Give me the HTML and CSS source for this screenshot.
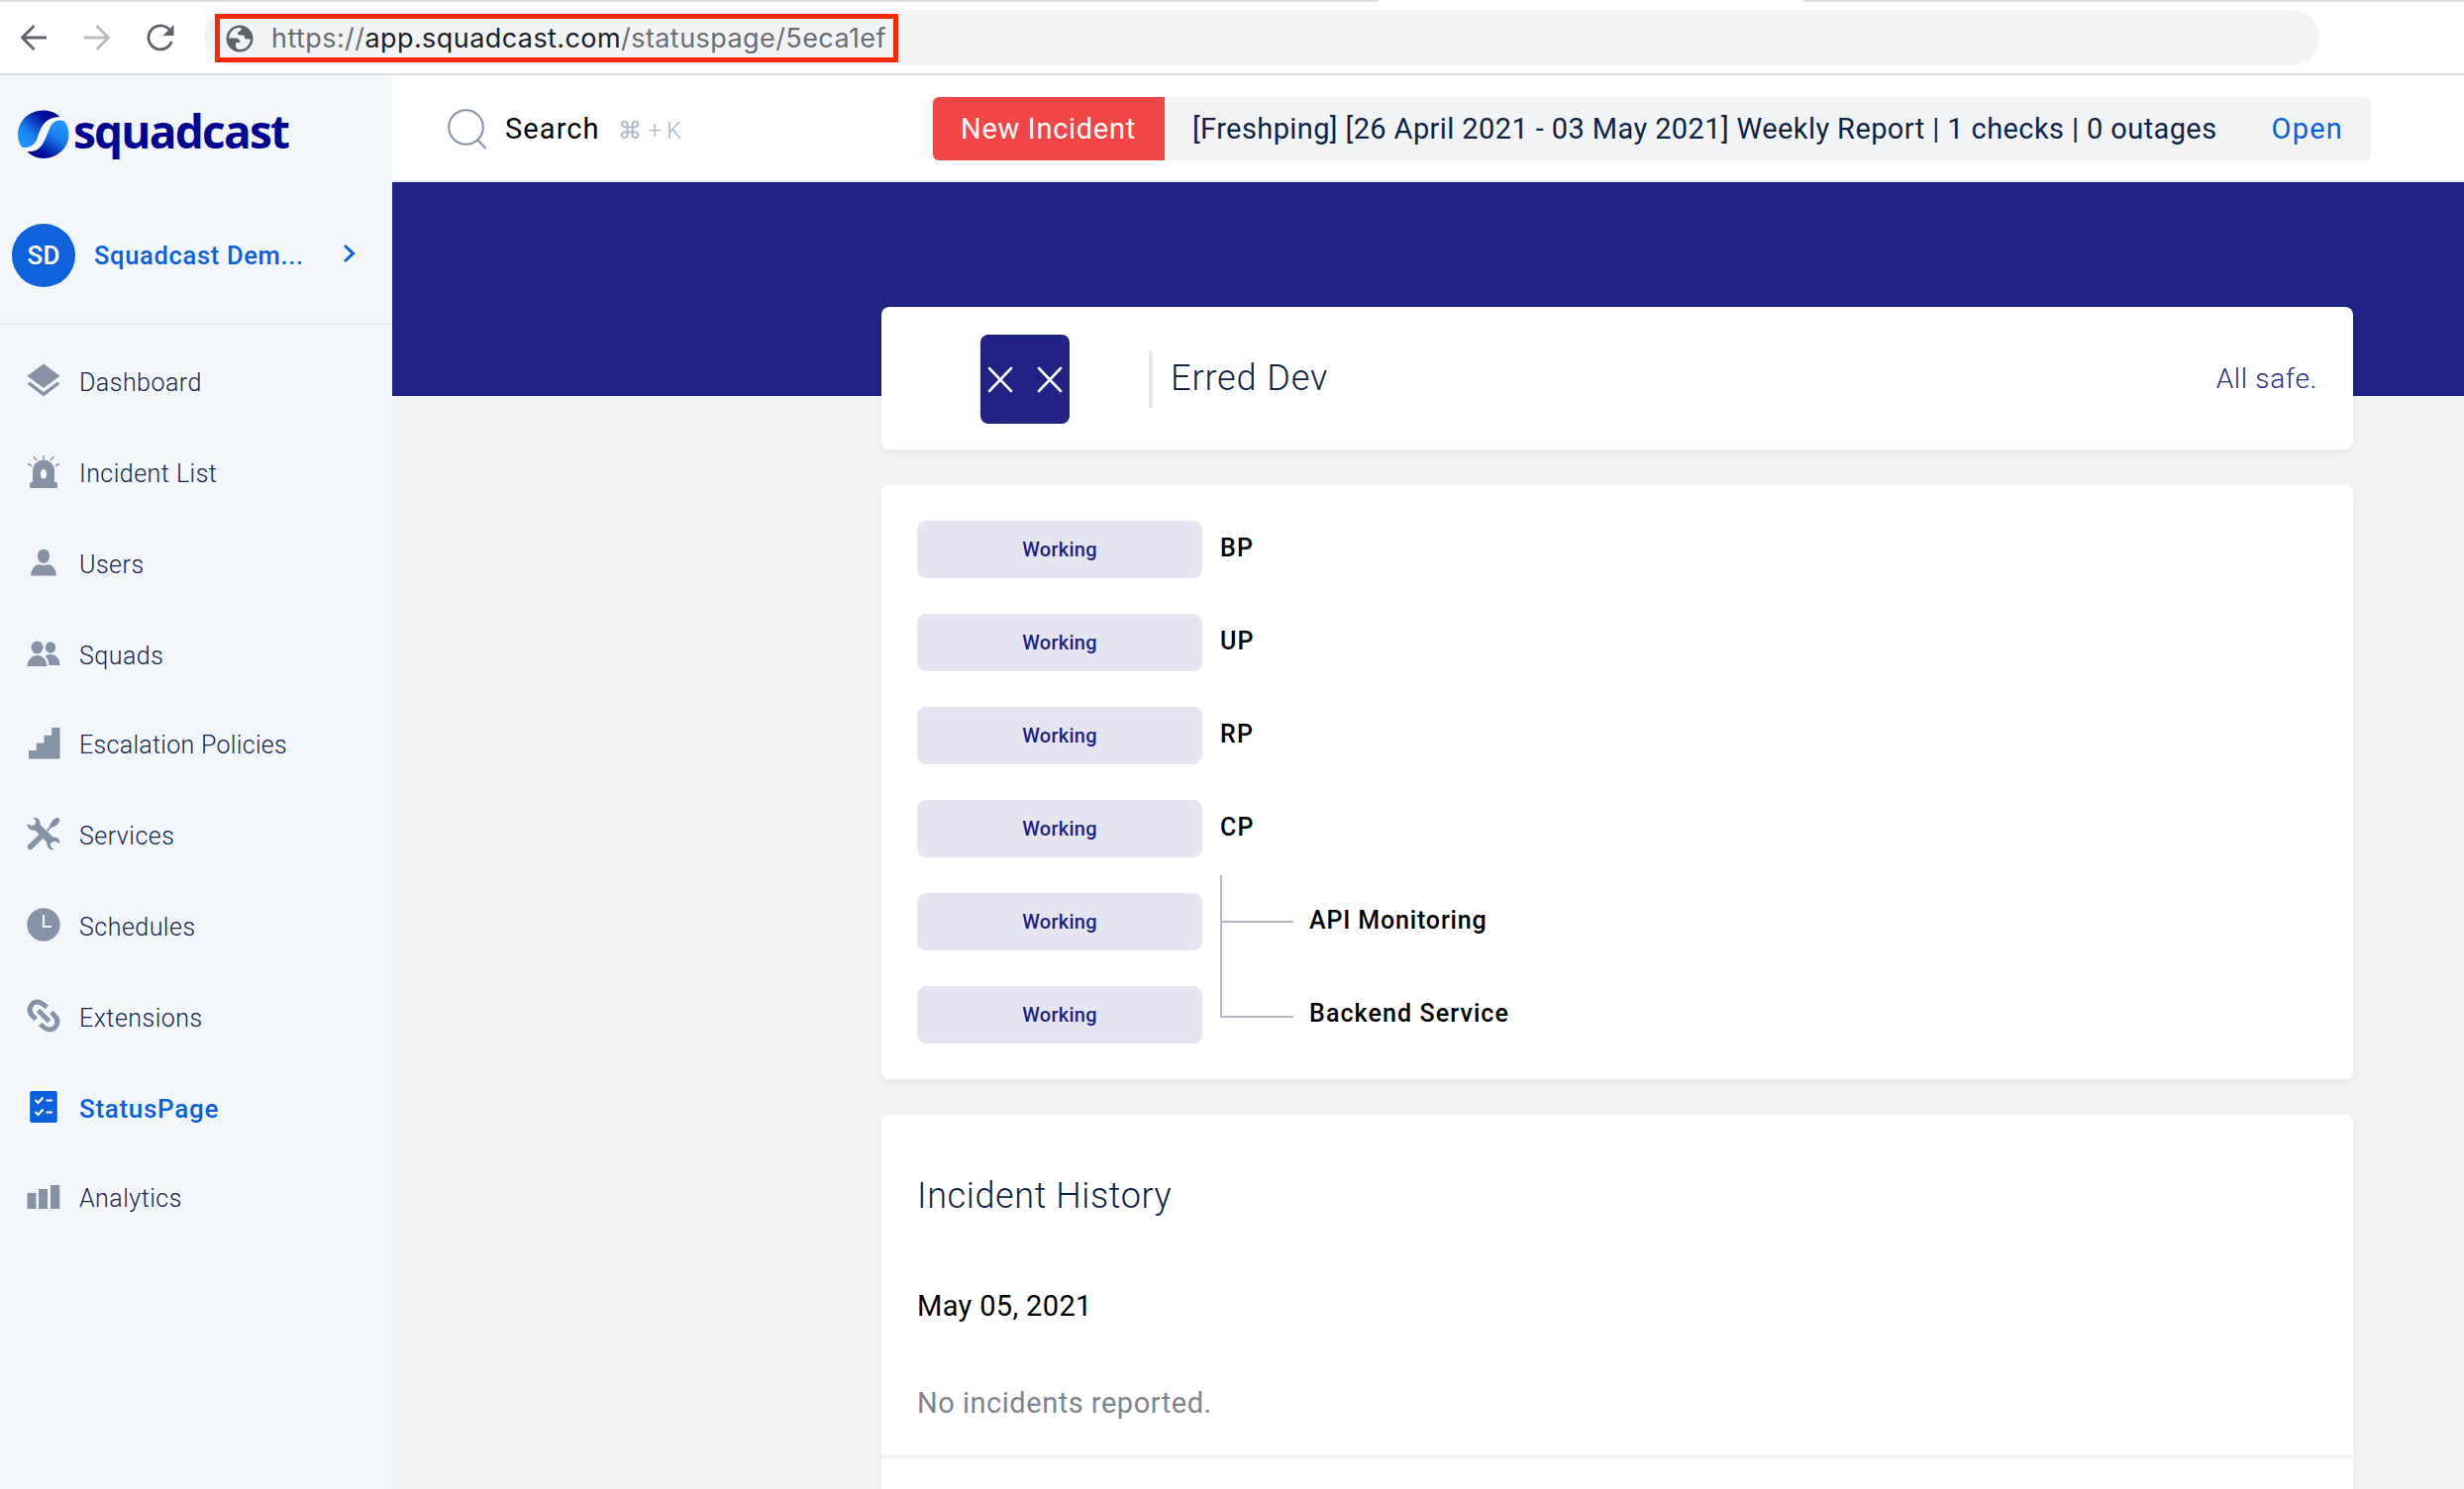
FILE: index.html
```html
<!DOCTYPE html>
<html lang="en">
<head>
<meta charset="utf-8">
<title>Erred Dev - Squadcast</title>
<link rel="stylesheet" href="styles.css">
</head>
<body>
<header class="browser">
  <div class="tab-edge"><span class="tab-line tab-line-left"></span><span class="tab-line tab-line-right"></span></div>
  <div class="toolbar">
    <svg class="nav-icon" width="28" height="28" viewBox="0 0 28 28" fill="none" stroke="#5f6368" stroke-width="2.8"><path d="M27 14H3M14.500 2L2.500 14l12 12"/></svg>
    <svg class="nav-icon" width="28" height="28" viewBox="0 0 28 28" fill="none" stroke="#babcbe" stroke-width="2.800"><path d="M1 14h24M13.500 2l12 12-12 12"/></svg>
    <svg class="nav-icon" width="28" height="28" viewBox="0 0 28 28" fill="none"><path d="M23.500 6.500A12 12 0 1 0 25.300 18" stroke="#5f6368" stroke-width="2.800"/><path d="M27.500 1v11H16.500z" fill="#5f6368"/></svg>
    <div class="omnibox">
      <div class="url-highlight">
        <svg width="28" height="28" viewBox="0 0 28 28" fill="#5f6368"><circle cx="14" cy="14" r="12.200" fill="#f1f3f4" stroke="#5f6368" stroke-width="2.600"/><path d="M15.500 2v2.500c0 1.300-.8 2-2 2.200-1 .2-1.500.8-1.500 1.800 0 1.200.8 2 2 2h3.200c1 0 1.600.6 1.600 1.500 0 1.600 1 2.600 2.500 2.600h5.500C26.500 7.500 22 2.500 15.500 2z"/><path d="M1.500 13.500h8.300c2.800 0 4.700 1.800 4.700 4.500h-3.200c-.8 0-1.300.5-1.300 1.300v2.400c0 1 .6 1.700 1.500 2V26C5.500 25 1.500 20 1.500 13.500z"/></svg>
        <span class="url">https://<b>app.squadcast.com</b>/statuspage/5eca1ef</span>
      </div>
    </div>
  </div>
</header>

<div class="app">
  <aside class="sidebar">
    <div class="logo">
      <svg width="52" height="50" viewBox="0 0 52 50">
        <defs>
          <linearGradient id="lg1" x1="0.1" y1="0.9" x2="0.9" y2="0.1"><stop offset="0" stop-color="#2296ff"/><stop offset=".3" stop-color="#1a7ef0"/><stop offset=".75" stop-color="#0312a0"/><stop offset="1" stop-color="#000490"/></linearGradient>
          <linearGradient id="lg2" x1="0.85" y1="0.05" x2="0.2" y2="1"><stop offset="0" stop-color="#2296ff"/><stop offset=".35" stop-color="#1a7ef0"/><stop offset=".8" stop-color="#0312a0"/><stop offset="1" stop-color="#000490"/></linearGradient>
        </defs>
        <path d="M42.500 7C37 1 28 -.8 19 1.200 7 4.200 0 14 0 25c0 5 1.500 9.500 4.500 13 7 .5 12-2 15-9C23 19 26 7.500 42.500 7z" fill="url(#lg1)"/>
        <path d="M9.500 42C15 48 23 50 31 48.500 43.500 46 51.500 36 51.500 25c0-5-1.500-10-4.500-13.500C39 8.500 34.500 13 31.500 20 27 31 24 43.500 9.500 42z" fill="url(#lg2)"/>
      </svg>
      <span class="wordmark">squadcast</span>
    </div>
    <div class="org">
      <span class="avatar">SD</span>
      <span class="org-name">Squadcast Dem...</span>
      <svg width="14" height="20" viewBox="0 0 14 20" fill="none" stroke="#0b60de" stroke-width="3"><path d="M2 2l8.500 8L2 18"/></svg>
    </div>
    <nav class="menu">
      <a class="item"><svg viewBox="0 0 36 36"><path d="M18 1.500L34.500 13.800 18 26 1.500 13.800z"/><path d="M1.500 21.800l2.700-2L18 30l13.800-10.200 2.700 2L18 34.500z"/></svg><span>Dashboard</span></a>
      <a class="item"><svg viewBox="0 0 36 36"><path fill-rule="evenodd" d="M7 29V18a11 11.500 0 0 1 22 0v11h1.500q1.500 0 1.500 1.500V34q0 1-1 1H5q-1 0-1-1v-3.500Q4 29 5.500 29zM18 16a3 4.800 0 0 0 0 9.600A3 4.800 0 0 0 18 16z"/><path d="M18 2v4M8 3.500l3 3.500M28 3.500L25 7M2 10.500l4 2M34 10.500l-4 2" stroke="#8792a4" stroke-width="1.500"/></svg><span>Incident List</span></a>
      <a class="item"><svg viewBox="0 0 36 36"><path d="M18 5c4 0 6 2.500 6 6.500S21.500 19 18 19s-6-3.500-6-7.500S14 5 18 5z"/><path d="M5 31.500c.5-6 3.500-11 8.500-11.500 2.500 1.200 6.500 1.200 9 0 5 .5 8 5.500 8.500 11.500z"/></svg><span>Users</span></a>
      <a class="item"><svg viewBox="0 0 36 36"><ellipse cx="11.500" cy="12" rx="6" ry="6.500"/><ellipse cx="25" cy="12" rx="5.200" ry="5.700"/><path d="M1.500 31C2 24 6 20 11.500 20s9.500 4 10 11z"/><path d="M19.500 20.500c1.500-1 3.500-1.600 5.500-1.600 5.500 0 9.300 4 9.500 11h-11c-.3-4-1.500-7-4-9.400z"/></svg><span>Squads</span></a>
      <a class="item short policies"><svg viewBox="0 0 36 36"><path d="M3 34.500V26h7.800v-7.600h7.700V10.700h7.700V3H34.500v31.500z"/></svg><span>Escalation Policies</span></a>
      <a class="item"><svg viewBox="0 0 36 36"><path d="M7.500 1.800c4-.8 8 2.500 7 7.200l13 12.500c4-.8 7.500 2.500 7 6.500l-4.700-2.300-4.200 1.300-.8 3.700 3.700 3.600c-4.500.7-8-3-7-7.300L9 14.500C5 15.500 1 12 1.700 8l3.800 2.300 3.800-1 1-4z"/><path d="M20.500 15l3.500-3.800c.5-4.500 4-8.500 8-9.500 1.700.2 2.500 1.500 2.300 3-1 3.500-4.500 6.500-8.300 7l-3.500 4zM13.500 19l3.800 3.800-11 11c-3 1.700-5.700-1.200-4.200-4z"/></svg><span>Services</span></a>
      <a class="item"><svg viewBox="0 0 36 36"><circle cx="18" cy="18" r="16.700"/><path d="M18 8v12h8" fill="none" stroke="#f3f6fb" stroke-width="2.200"/></svg><span>Schedules</span></a>
      <a class="item"><svg viewBox="0 0 36 36"><g fill="none" stroke="#8792a4" stroke-width="5"><path d="M10.200 21.500l-3-3C.500 11.800 6 4 12 4c3.500 0 5.500 2 9.300 5.500"/><path d="M25.800 14.500l3 3C35.500 24.200 30 32 24 32c-3.500 0-5.500-2-9.300-5.500"/><path d="M12.500 12.500l11 11"/></g></svg><span>Extensions</span></a>
      <a class="item active"><svg viewBox="0 0 36 36"><rect x="4.200" y="2" width="27.600" height="32" rx="2"/><path d="M9.500 11l3 3 5-5.500M9.500 23l3 3 5-5.500M20.500 11.500H27M20.500 23.500H27" fill="none" stroke="#fff" stroke-width="2.200"/></svg><span>StatusPage</span></a>
      <a class="item short"><svg viewBox="0 0 36 36"><path d="M1.500 31V15h9v16zM13 31V11h9v20zM25 31V7h9.300v24z"/></svg><span>Analytics</span></a>
    </nav>
  </aside>

  <main class="main">
    <div class="topbar">
      <svg class="search-icon" width="42" height="42" viewBox="0 0 42 42" fill="none" stroke="#8592a8" stroke-width="2"><circle cx="18.500" cy="19.500" r="17.300"/><path d="M30 32l8.500 9"/></svg>
      <span class="search">Search</span>
      <span class="keys"><span class="cmd">⌘</span><span>+ K</span></span>
      <div class="notice">
        <span class="notice-tag">New Incident</span>
        <span class="notice-text">[Freshping] [26 April 2021 - 03 May 2021] Weekly Report | 1 checks | 0 outages</span>
        <a class="notice-open">Open</a>
      </div>
    </div>
    <div class="banner"></div>
    <div class="content">
      <section class="card head">
        <svg class="brand" width="90" height="90" viewBox="0 0 90 90"><rect width="90" height="90" rx="8" fill="#212284"/><path d="M9 34l22 23M31 34L9 57M59 34l22 23M81 34L59 57" stroke="#fff" stroke-width="2.600" stroke-linecap="round"/></svg>
        <h1 class="title">Erred Dev</h1>
        <span class="safe">All safe.</span>
      </section>
      <section class="card services">
        <div class="row"><span class="badge">Working</span><span class="name">BP</span></div>
        <div class="row"><span class="badge">Working</span><span class="name">UP</span></div>
        <div class="row"><span class="badge">Working</span><span class="name">RP</span></div>
        <div class="row"><span class="badge">Working</span><span class="name">CP</span></div>
        <div class="row"><span class="badge">Working</span><span class="branch"></span><span class="name child">API Monitoring</span></div>
        <div class="row"><span class="badge">Working</span><span class="branch branch-last"></span><span class="name child last">Backend Service</span></div>
      </section>
      <section class="card history">
        <h2 class="history-title">Incident History</h2>
        <h3 class="date">May 05, 2021</h3>
        <p class="none">No incidents reported.</p>
      </section>
    </div>
  </main>
</div>
</body>
</html>
```
FILE: styles.css
```css
* { box-sizing: border-box; }
body { margin: 0; height: 1504px; overflow: hidden; font-family: Roboto, "Liberation Sans", sans-serif; font-size: 29px; background: #fff; }
h1, h2, h3, p { margin: 0; font-weight: 400; }
svg { display: block; flex: none; }
span, a, h1, h2, h3 { white-space: nowrap; }

/* browser toolbar */
.browser { height: 76px; background: #fff; border-bottom: 2px solid #dadce0; }
.tab-edge { height: 2px; display: flex; justify-content: space-between; }
.tab-line { height: 2px; background: #dfe0e5; }
.tab-line-left { width: 1392px; border-bottom-right-radius: 2px; }
.tab-line-right { width: 668px; border-bottom-left-radius: 2px; }
.toolbar { height: 72px; display: flex; align-items: center; padding-left: 20px; gap: 36px; }
.nav-icon { margin-top: -1px; }
.omnibox { width: 2136px; height: 56px; margin-left: -6px; border-radius: 28px; background: #f1f3f4; padding: 4px 0 0 11px; }
.url-highlight { width: 690px; height: 49px; border: 5px solid #ff2600; display: flex; align-items: center; padding-left: 6px; gap: 18px; }
.url { font-family: Inter, sans-serif; font-size: 27px; letter-spacing: .425px; color: #6b6d70; }
.url b { font-weight: 400; color: #202124; }

.app { display: flex; height: 1428px; }

/* sidebar */
.sidebar { width: 396px; flex: none; background: #f3f6fb; }
.logo { height: 106px; padding: 35px 0 0 18px; display: flex; gap: 4px; }
.wordmark { margin-top: 2px; font: 700 46px/38px "Open Sans", sans-serif; letter-spacing: -1.8px; color: #000490; }
.org { height: 146px; display: flex; align-items: center; padding: 8px 0 0 12px; border-bottom: 2px solid #e6ebf3; color: #0b60de; font-weight: 500; }
.avatar { width: 64px; height: 64px; border-radius: 50%; background: #0f62db; color: #fff; display: flex; align-items: center; justify-content: center; font-size: 26px; letter-spacing: .2px; }
.org-name { margin: -1px 0 0 19px; width: 251px; font-size: 25.5px; letter-spacing: .67px; }
.org svg { margin-top: -4px; }
.menu { padding-top: 12px; }
.item { height: 92px; display: flex; align-items: center; padding-left: 26px; gap: 18px; font-size: 25px; font-weight: 300; letter-spacing: .48px; color: #14284f; fill: #8792a4; }
.item svg { width: 36px; height: 36px; margin-top: -4px; }
.short { margin-top: -2px; }
.policies { letter-spacing: .3px; }
.active { color: #0b60de; fill: #0b60de; font-size: 26px; font-weight: 500; letter-spacing: .7px; }

/* main column */
.main { flex: 1; min-width: 0; background: #f2f3f5; }
.topbar { height: 108px; background: #fff; border-bottom: 2px solid #e6ecf5; display: flex; align-items: center; padding: 2px 94px 0 56px; }
.search { margin-left: 16px; letter-spacing: 1.1px; color: #000; }
.keys { display: flex; gap: 7px; margin: 3px 0 0 18px; font-size: 24px; font-weight: 300; letter-spacing: -.4px; color: #adb6c6; }
.cmd { font-family: "DejaVu Sans", sans-serif; }
.notice { margin-left: auto; width: 1452px; height: 64px; border-radius: 6px; overflow: hidden; background: #f2f3f5; display: flex; align-items: center; color: #0f2347; }
.notice-tag { width: 234px; height: 64px; line-height: 64px; padding-left: 28px; letter-spacing: .7px; background: #f24545; color: #fff; }
.notice-text { margin-left: 28px; letter-spacing: .4px; }
.notice-open { margin: 0 28px 0 auto; letter-spacing: 1.2px; color: #0b60de; }
.banner { height: 216px; background: #202284; }

.content { margin: -90px 112px 0 494px; display: flex; flex-direction: column; gap: 36px; }
.card { background: #fff; border-radius: 8px; box-shadow: 0 4px 8px rgba(0, 0, 0, .05); }
.head { height: 144px; display: flex; align-items: center; padding: 2px 36px 0 100px; }
.title { margin-left: 80px; height: 58px; border-left: 4px solid #e3e8ee; padding-left: 18px; font-size: 36px; line-height: 57px; font-weight: 300; letter-spacing: .9px; color: #0f2347; }
.safe { margin: -2px 0 0 auto; font-size: 28px; font-weight: 300; letter-spacing: .68px; color: #2a2b8a; }

.services { height: 600px; padding: 36px; display: flex; flex-direction: column; gap: 36px; }
.row { height: 58px; display: flex; align-items: center; }
.badge { width: 288px; height: 58px; line-height: 59px; border-radius: 9px; background: #e5e5f1; color: #212284; text-align: center; font-size: 20px; font-weight: 500; letter-spacing: .27px; }
.name { margin: -3px 0 0 18px; font-size: 25px; font-weight: 500; letter-spacing: 1.2px; color: #000; }

/* connector from a parent service to its children */
.branch { width: 74px; height: 48px; margin: -18px 0 0 18px; border: solid #b4b9ca; border-width: 0 0 2px 2px; align-self: flex-start; }
.branch-last { height: 96px; margin-top: -64px; }
.child { margin-left: 16px; letter-spacing: .85px; }
.child.last { letter-spacing: 1.1px; }

.history { height: 420px; }
.history-title { padding: 60px 36px 0; font-size: 36px; line-height: 44px; font-weight: 300; letter-spacing: .6px; color: #0f2347; }
.date { padding: 69px 36px 0; font-size: 29px; line-height: 40px; letter-spacing: .35px; color: #000; }
.none { padding: 58px 36px 32px; line-height: 40px; letter-spacing: .52px; color: #81848d; border-bottom: 4px solid #f2f3f5; }
```
